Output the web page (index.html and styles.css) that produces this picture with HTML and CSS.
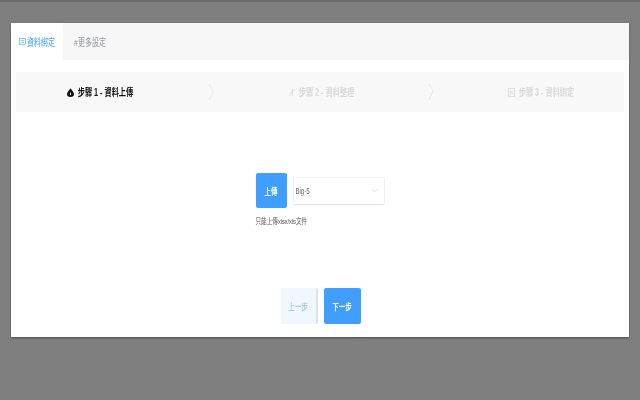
FILE: index.html
```html
<!DOCTYPE html>
<html lang="zh-Hant">
<head>
  <meta charset="UTF-8">
  <title>資料綁定</title>
  <link rel="stylesheet" href="styles.css">
</head>
<body>
  <div class="card">
    <!-- Tabs -->
    <div class="tabs">
      <div class="tab active">
        <svg class="tab-icon" viewBox="0 0 8 8"><rect x="0.5" y="0.5" width="7" height="7" fill="none" stroke="currentColor" stroke-width="0.7"/><path d="M2 3h4M2 5h4" stroke="currentColor" stroke-width="0.7"/></svg>
        <span class="narrow">資料綁定</span>
      </div>
      <div class="tab">
        <span class="narrow">#更多設定</span>
      </div>
    </div>

    <!-- Steps -->
    <div class="steps">
      <div class="step step-first current">
        <svg class="step-icon" viewBox="0 0 8 10"><path d="M4 0C5 2 8 4 8 7a4 3 0 0 1-8 0C0 4 3 2 4 0z" fill="currentColor"/><path d="M4 5v3" stroke="#f8f8f8"/></svg>
        <span class="narrow">步驟 1 - 資料上傳</span>
      </div>
      <svg class="chevron" viewBox="0 0 6 18"><path d="M1 1c1 3 4 5 4 8s-3 5-4 8" fill="none" stroke="#e8e8e8"/></svg>
      <div class="step step-mid">
        <svg class="step-icon" viewBox="0 0 8 10"><path d="M7 1L1 9M5 1v8" fill="none" stroke="currentColor"/></svg>
        <span class="narrow">步驟 2 - 資料整理</span>
      </div>
      <svg class="chevron" viewBox="0 0 6 18"><path d="M1 1l4 7-4 9" fill="none" stroke="#e8e8e8"/></svg>
      <div class="step step-last">
        <svg class="step-icon" viewBox="0 0 8 10"><rect x="0.5" y="0.5" width="7" height="9" fill="none" stroke="currentColor"/><path d="M2 4h4M2 6h4" stroke="currentColor"/></svg>
        <span class="narrow">步驟 3 - 資料綁定</span>
      </div>
    </div>

    <!-- Upload -->
    <div class="upload">
      <div class="upload-row">
        <button class="btn btn-upload"><span class="narrow">上傳</span></button>
        <div class="select">
          <span class="narrow">Big-5</span>
          <svg class="select-arrow" viewBox="0 0 8 5"><path d="M1 1l3 3 3-3" fill="none" stroke="#d5d8de"/></svg>
        </div>
      </div>
      <div class="hint"><span class="narrow">只能上傳xlsx/xls文件</span></div>
    </div>

    <!-- Actions -->
    <div class="actions">
      <button class="btn btn-prev"><span class="narrow">上一步</span></button>
      <button class="btn btn-next"><span class="narrow">下一步</span></button>
    </div>
  </div>
</body>
</html>
```

FILE: styles.css
```css
body, html {
  margin: 0;
  padding: 0;
  height: 100%;
  overflow: hidden;
}

body {
  background: #7f7f7f;
  border-top: 2px solid #6c6c6c;
  font-family: "Liberation Sans", "Noto Sans CJK TC", sans-serif;
  padding: 21px 11px 0;
  box-sizing: border-box;
}

/* Screenshot text is squeezed in width and a little blurred */
.narrow {
  display: inline-block;
  white-space: nowrap;
  transform: scaleY(1.4);
  filter: blur(0.3px);
}

.card {
  background: #fff;
  height: 314px;
  box-shadow: 0 1px 2px rgba(0, 0, 0, 0.4);
  display: flex;
  flex-direction: column;
}

/* Tabs */
.tabs {
  display: flex;
  height: 37px;
  background: #f7f7f7;
}

.tab {
  display: flex;
  align-items: center;
  gap: 1px;
  height: 37px;
  padding: 0 11px;
  font-size: 7px;
  color: #909399;
}

.tab.active {
  width: 52px;
  box-sizing: border-box;
  padding: 0 8px;
  background: #fff;
  color: #409eff;
}

.tab-icon {
  width: 7px;
  height: 9px;
  flex: none;
}

/* Steps */
.steps {
  display: flex;
  align-items: center;
  height: 40px;
  margin: 12px 5px 0;
  background: #f8f8f8;
}

.step {
  display: flex;
  align-items: center;
  justify-content: center;
  gap: 4px;
  font-size: 7.2px;
  font-weight: bold;
  color: #d9d9d9;
}

.step.current {
  color: #111;
}

.step-first {
  width: 192px;
  padding-right: 24px;
  box-sizing: border-box;
}

.step-mid {
  width: 214px;
}

.step-last {
  flex: 1;
  padding-left: 24px;
}

.step-icon {
  width: 7px;
  height: 9px;
  flex: none;
}

.chevron {
  width: 6px;
  height: 18px;
  flex: none;
}

/* Upload */
.upload {
  align-self: center;
  margin: 61px 0 0;
  width: 129px;
}

.upload-row {
  display: flex;
  align-items: center;
  gap: 6px;
}

.btn {
  border: none;
  padding: 0;
  font-family: inherit;
  font-size: 6.5px;
  font-weight: bold;
  border-radius: 2px;
}

.btn-upload {
  width: 31px;
  height: 35px;
  background: #409eff;
  color: #fff;
}

.select {
  flex: 1;
  height: 28px;
  box-sizing: border-box;
  border: 1px solid #f0f1f4;
  border-bottom-color: #e2e4e8;
  border-radius: 2px;
  display: flex;
  align-items: center;
  justify-content: space-between;
  padding: 0 6px 0 2px;
  font-size: 6px;
  color: #606266;
}

.select-arrow {
  width: 7px;
  height: 5px;
}

.hint {
  margin-top: 8px;
  font-size: 5.6px;
  line-height: 10px;
  color: #555;
}

/* Actions */
.actions {
  display: flex;
  justify-content: center;
  gap: 6px;
  margin: 62px 0 0 1px;
}

.btn-prev,
.btn-next {
  width: 37px;
  height: 36px;
}

.btn-prev {
  background: #f0f7ff;
  color: #a9cdf0;
  border-right: 2px solid #d9e2ea;
}

.btn-next {
  background: #409eff;
  color: #fff;
}
```
